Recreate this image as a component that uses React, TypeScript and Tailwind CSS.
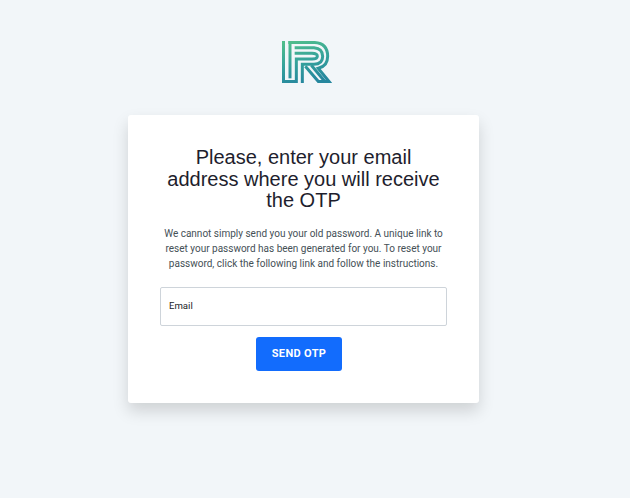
function Logo() {
  return (
    <svg width="50" height="42" viewBox="0 0 150 126" fill="none">
      <defs>
        <linearGradient id="mark" x1="30" y1="0" x2="60" y2="126" gradientUnits="userSpaceOnUse">
          <stop offset="0" stopColor="#50bd8b" />
          <stop offset="0.5" stopColor="#36a39b" />
          <stop offset="1" stopColor="#26879e" />
        </linearGradient>
      </defs>
      <g stroke="url(#mark)" strokeWidth="9">
        <path d="M4.5 0V121.5H43V54H90Q106 54 106 46Q106 37 90 37H38" />
        <path d="M19 4.5H98Q137 7 137 46Q137 76 109 82L141 121.5H109L70 76" />
        <path d="M24 0V112" />
        <path d="M38 20H96Q122 22 122 46Q122 70 96 70H61V126" />
        <path d="M88 73L128 121" />
      </g>
    </svg>
  );
}

export default function App() {
  return (
    <main className="flex h-[498px] w-[630px] flex-col items-start bg-[#f2f6f9] pl-32 font-[Roboto,sans-serif]">
      <div className="flex w-[351px] justify-center pt-[41px] pl-[6px]">
        <Logo />
      </div>
      <section className="mt-8 flex h-[288px] w-[351px] flex-col items-center rounded-[3px] bg-white px-8 pt-8 text-center shadow-[0_8px_16px_rgba(0,0,0,0.15)]">
        <h1 className="font-['Liberation_Sans',Arial,sans-serif] text-[20px] leading-[21.6px] text-[#1e1e2d]">
          Please, enter your email
          <br />
          address where you will receive
          <br />
          the OTP
        </h1>
        <p className="mt-[14px] text-[10px] leading-[15px] whitespace-nowrap text-[#455056]">
          We cannot simply send you your old password. A unique link to
          <br />
          reset your password has been generated for you. To reset your
          <br />
          password, click the following link and follow the instructions.
        </p>
        <input
          aria-label="Email"
          placeholder="Email"
          className="mt-4 h-[39px] w-[287px] shrink-0 rounded-[2px] border border-[#ced4da] px-2 pb-0.5 text-[9.6px] text-[#212529] outline-none placeholder:text-[#212529]"
        />
        <button className="mt-[11px] mr-[10px] h-[34px] w-[86px] shrink-0 rounded-[3px] bg-[#126cfd] pl-px text-[11px] font-bold tracking-[0.35px] text-white">
          SEND OTP
        </button>
      </section>
    </main>
  );
}
